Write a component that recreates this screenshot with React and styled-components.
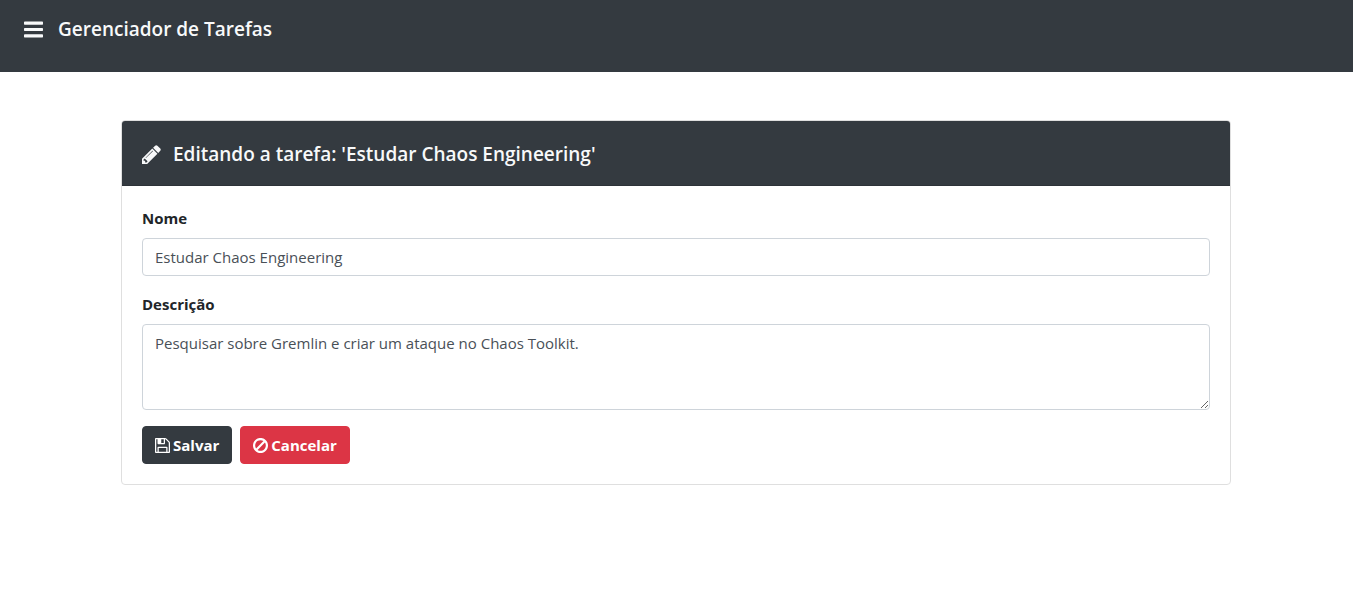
import React from "react";
import styled, { createGlobalStyle } from "styled-components";

const GlobalStyle = createGlobalStyle`
  *, *::before, *::after { box-sizing: border-box; }
  body {
    margin: 0;
    background: #fff;
    color: #212529;
    font-family: "Open Sans", "Noto Sans", sans-serif;
    font-size: 15px;
    line-height: 24px;
  }
`;

const TopBar = styled.header`
  display: flex;
  align-items: flex-start;
  min-height: 72px;
  padding: 14px 24px;
  background: #343a40;
`;

const Brand = styled.a`
  display: flex;
  align-items: center;
  gap: 15px;
  color: #f8f9fa;
  font-size: 19px;
  line-height: 30px;
  font-weight: 600;
  text-decoration: none;
`;

const Main = styled.main`
  max-width: 1141px;
  margin: 48px auto 0;
  padding: 0 16px 0 15px;
`;

const Card = styled.section`
  border: 1px solid #dfdfdf;
  border-radius: 4px;
`;

const CardHeader = styled.header`
  display: flex;
  align-items: center;
  gap: 12px;
  padding: 21px 20px 19px;
  border-bottom: 1px solid #2d3238;
  border-radius: 3px 3px 0 0;
  background: #343a40;
  color: #f8f9fa;
`;

const CardTitle = styled.h1`
  margin: 0;
  font-size: 19px;
  line-height: 24px;
  font-weight: 600;
`;

const Form = styled.form`
  padding: 20px;
`;

const Field = styled.div`
  display: flex;
  flex-direction: column;
  gap: 8px;
  margin-bottom: 16px;
`;

const Label = styled.label`
  font-weight: 700;
`;

const Input = styled.input`
  width: 100%;
  height: 38px;
  padding: 6px 12px;
  border: 1px solid #ced4da;
  border-radius: 4px;
  background: #fff;
  color: #495057;
  font: inherit;
`;

const TextArea = styled(Input).attrs({ as: "textarea" })`
  height: 86px;
  resize: vertical;
`;

const Actions = styled.div`
  display: flex;
  gap: 8px;
`;

const Button = styled.button`
  display: flex;
  align-items: center;
  gap: 3px;
  padding: 6px 12px;
  border: 1px solid ${(p) => (p.$danger ? "#dc3545" : "#343a40")};
  border-radius: 4px;
  background: ${(p) => (p.$danger ? "#dc3545" : "#343a40")};
  color: #fff;
  font: inherit;
  font-weight: 700;
  cursor: pointer;
`;

const Glyph = styled.svg`
  flex: none;
  width: ${(p) => p.$size}px;
  height: ${(p) => p.$size}px;
  fill: currentColor;
`;

const paths = {
  bars: "M1664 1344v128q0 26-19 45t-45 19h-1408q-26 0-45-19t-19-45v-128q0-26 19-45t45-19h1408q26 0 45 19t19 45zm0-512v128q0 26-19 45t-45 19h-1408q-26 0-45-19t-19-45v-128q0-26 19-45t45-19h1408q26 0 45 19t19 45zm0-512v128q0 26-19 45t-45 19h-1408q-26 0-45-19t-19-45v-128q0-26 19-45t45-19h1408q26 0 45 19t19 45z",
  pencil:
    "M491 1536l91-91-235-235-91 91v107h128v128h107zm523-928q0-22-22-22-10 0-17 7l-542 542q-7 7-7 17 0 22 22 22 10 0 17-7l542-542q7-7 7-17zm-54-192l416 416-832 832h-416v-416zm683 96q0 53-37 90l-166 166-416-416 166-165q36-38 90-38 53 0 91 38l235 234q37 39 37 91z",
  save: "M512 1536h768v-384h-768v384zm896 0h128v-896q0-14-10-38.5t-20-34.5l-281-281q-10-10-34-20t-39-10v416q0 40-28 68t-68 28h-576q-40 0-68-28t-28-68v-416h-128v1280h128v-416q0-40 28-68t68-28h832q40 0 68 28t28 68v416zm-384-928v-320q0-13-9.500-22.500t-22.500-9.500h-192q-13 0-22.500 9.500t-9.500 22.500v320q0 13 9.500 22.500t22.500 9.500h192q13 0 22.500-9.500t9.500-22.500zm640 32v928q0 40-28 68t-68 28h-1344q-40 0-68-28t-28-68v-1344q0-40 28-68t68-28h928q40 0 88 20t76 48l280 280q28 28 48 76t20 88z",
  ban: "M1440 893q0-161-87-295l-754 753q137 89 297 89 111 0 211.500-43.500t173.500-116.500 116-174.500 43-212.500zm-999 299l755-754q-135-91-300-91-148 0-273 73t-198 199-73 274q0 162 89 299zm1223-299q0 157-61 300t-163.500 246-245 164-298.500 61-298.500-61-245-164-163.500-246-61-300 61-299.500 163.500-245.500 245-164 298.500-61 298.500 61 245 164 163.500 245.500 61 299.500z",
};

function Icon({ name, size = 15 }) {
  return (
    <Glyph $size={size} viewBox="128 128 1536 1536" aria-hidden="true">
      <path d={paths[name]} />
    </Glyph>
  );
}

export default function App() {
  return (
    <>
      <GlobalStyle />
      <TopBar>
        <Brand href="#">
          <Icon name="bars" size={19} />
          Gerenciador de Tarefas
        </Brand>
      </TopBar>
      <Main>
        <Card>
          <CardHeader>
            <Icon name="pencil" size={19} />
            <CardTitle>Editando a tarefa: 'Estudar Chaos Engineering'</CardTitle>
          </CardHeader>
          <Form onSubmit={(e) => e.preventDefault()}>
            <Field>
              <Label htmlFor="nome">Nome</Label>
              <Input id="nome" type="text" defaultValue="Estudar Chaos Engineering" />
            </Field>
            <Field>
              <Label htmlFor="descricao">Descrição</Label>
              <TextArea
                id="descricao"
                defaultValue="Pesquisar sobre Gremlin e criar um ataque no Chaos Toolkit."
              />
            </Field>
            <Actions>
              <Button type="submit">
                <Icon name="save" />
                Salvar
              </Button>
              <Button type="button" $danger>
                <Icon name="ban" />
                Cancelar
              </Button>
            </Actions>
          </Form>
        </Card>
      </Main>
    </>
  );
}
